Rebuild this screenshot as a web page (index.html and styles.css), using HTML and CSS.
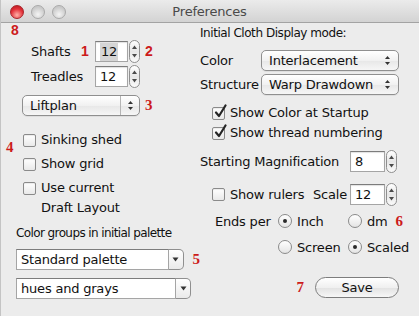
FILE: index.html
```html
<!DOCTYPE html>
<html lang="en">
<head>
  <meta charset="UTF-8" />
  <title>Preferences</title>
  <link rel="stylesheet" href="styles.css">
</head>
<body>
  <div class="window">
    <div class="titlebar">
      <div class="lights">
        <span class="light red"></span>
        <span class="light"></span>
        <span class="light"></span>
      </div>
      <div class="title">Preferences</div>
    </div>
    <span class="mark sans mark-8">8</span>

    <div class="content">
      <div class="col left">
        <div class="spin-row">
          <span class="label short">Shafts</span>
          <span class="mark sans slot">1</span>
          <span class="field"><span class="sel">12</span></span>
          <span class="stepper"><svg width="9" height="19" viewBox="0 0 9 19"><path d="M2 7 L4.5 3.5 L7 7Z"/><path d="M2 12 L4.5 15.5 L7 12Z"/></svg></span>
          <span class="mark sans after">2</span>
        </div>
        <div class="spin-row gap">
          <span class="label">Treadles</span>
          <span class="field">12</span>
          <span class="stepper"><svg width="9" height="19" viewBox="0 0 9 19"><path d="M2 7 L4.5 3.5 L7 7Z"/><path d="M2 12 L4.5 15.5 L7 12Z"/></svg></span>
        </div>
        <div class="popup-row">
          <div class="popup split">
            <span class="popup-text">Liftplan</span>
            <span class="popup-arrows"><svg width="7" height="11" viewBox="0 0 7 11"><path d="M1 4 L3.5 1 L6 4Z"/><path d="M1 7 L3.5 10 L6 7Z"/></svg></span>
          </div>
          <span class="mark serif after">3</span>
        </div>

        <div class="check-row first">
          <span class="mark serif mark-4">4</span>
          <span class="box"></span>
          <span class="check-text">Sinking shed</span>
        </div>
        <div class="check-row">
          <span class="box"></span>
          <span class="check-text">Show grid</span>
        </div>
        <div class="check-row">
          <span class="box"></span>
          <span class="check-text">Use current<br>Draft Layout</span>
        </div>

        <div class="group-label">Color groups in initial palette</div>
        <div class="combo-row">
          <div class="combo">
            <span class="combo-text">Standard palette</span>
            <span class="combo-btn"><svg width="7" height="5" viewBox="0 0 7 5"><path d="M0.5 0.5 L6.5 0.5 L3.5 4.5Z"/></svg></span>
          </div>
          <span class="mark serif after">5</span>
        </div>
        <div class="combo-row second">
          <div class="combo">
            <span class="combo-text">hues and grays</span>
            <span class="combo-btn"><svg width="7" height="5" viewBox="0 0 7 5"><path d="M0.5 0.5 L6.5 0.5 L3.5 4.5Z"/></svg></span>
          </div>
        </div>
      </div>

      <div class="col right">
        <div class="heading">Initial Cloth Display mode:</div>
        <div class="select-row">
          <span class="select-label">Color</span>
          <div class="popup wide">
            <span class="popup-text">Interlacement</span>
            <span class="popup-arrows"><svg width="7" height="11" viewBox="0 0 7 11"><path d="M1 4 L3.5 1 L6 4Z"/><path d="M1 7 L3.5 10 L6 7Z"/></svg></span>
          </div>
        </div>
        <div class="select-row gap">
          <span class="select-label">Structure</span>
          <div class="popup wide">
            <span class="popup-text">Warp Drawdown</span>
            <span class="popup-arrows"><svg width="7" height="11" viewBox="0 0 7 11"><path d="M1 4 L3.5 1 L6 4Z"/><path d="M1 7 L3.5 10 L6 7Z"/></svg></span>
          </div>
        </div>

        <div class="check-row indent first-right">
          <span class="box checked"><svg width="14" height="15" viewBox="0 0 14 15"><path d="M3 8.5 L6 12 L12.5 1.5" fill="none" stroke="#262626" stroke-width="2.2" stroke-linecap="round" stroke-linejoin="round"/></svg></span>
          <span class="check-text">Show Color at Startup</span>
        </div>
        <div class="check-row indent tight">
          <span class="box checked"><svg width="14" height="15" viewBox="0 0 14 15"><path d="M3 8.5 L6 12 L12.5 1.5" fill="none" stroke="#262626" stroke-width="2.2" stroke-linecap="round" stroke-linejoin="round"/></svg></span>
          <span class="check-text">Show thread numbering</span>
        </div>

        <div class="spin-row mag">
          <span class="mag-label">Starting Magnification</span>
          <span class="field">8</span>
          <span class="stepper"><svg width="9" height="19" viewBox="0 0 9 19"><path d="M2 7 L4.5 3.5 L7 7Z"/><path d="M2 12 L4.5 15.5 L7 12Z"/></svg></span>
        </div>
        <div class="spin-row rulers">
          <div class="ruler-check">
            <span class="box"></span>
            <span class="check-text">Show rulers</span>
          </div>
          <span class="scale-label">Scale</span>
          <span class="field">12</span>
          <span class="stepper"><svg width="9" height="19" viewBox="0 0 9 19"><path d="M2 7 L4.5 3.5 L7 7Z"/><path d="M2 12 L4.5 15.5 L7 12Z"/></svg></span>
        </div>

        <div class="radio-row ends">
          <span class="ends-label">Ends per</span>
          <span class="radio-opt first-opt"><span class="radio on"></span>Inch</span>
          <span class="radio-opt"><span class="radio"></span>dm</span>
          <span class="mark serif after6">6</span>
        </div>
        <div class="radio-row screen">
          <span class="radio-opt first-opt"><span class="radio"></span>Screen</span>
          <span class="radio-opt"><span class="radio on"></span>Scaled</span>
        </div>

        <div class="save-row">
          <span class="mark serif">7</span>
          <button class="save">Save</button>
        </div>
      </div>
    </div>
  </div>
</body>
</html>
```

FILE: styles.css
```css
:root {
  --bg: #ececec;
  --text: #111111;
  --mark: #cc1b1b;
  --edge: #8f8f8f;
}
* { margin: 0; padding: 0; box-sizing: border-box; }
body {
  font-family: 'DejaVu Sans', 'Liberation Sans', sans-serif;
  font-size: 13px;
  letter-spacing: -0.2px;
  color: var(--text);
  background: var(--bg);
  width: 419px;
  height: 316px;
  overflow: hidden;
}
.window {
  position: relative;
  width: 419px;
  height: 316px;
  background: var(--bg);
  border-left: 1px solid #c4c4c4;
}

/* title bar */
.titlebar {
  height: 23px;
  display: flex;
  align-items: center;
  background: linear-gradient(#ebebeb, #d3d3d3);
  border-bottom: 1px solid #a3a3a3;
}
.lights {
  display: flex;
  gap: 7px;
  padding-left: 9px;
  padding-top: 2px;
}
.light {
  width: 14px;
  height: 14px;
  border-radius: 50%;
  border: 1px solid #a9a9a9;
  background: radial-gradient(circle at 50% 70%, #f4f4f4, #c9c9c9 70%);
}
.light.red {
  border-color: #a8242a;
  background: radial-gradient(circle at 50% 75%, #ffb1a8, #e4333b 55%, #b3151b 100%);
}
.title {
  flex: 1;
  text-align: center;
  font-size: 13px;
  color: #4a4a4a;
  margin-left: -66px;
  padding-top: 1px;
}

/* red annotation numbers */
.mark {
  color: var(--mark);
  font-weight: bold;
  font-size: 14px;
  line-height: 1;
  letter-spacing: 0;
}
.mark.serif { font-family: 'Liberation Serif', serif; font-size: 15px; }
.mark.sans { font-family: 'Liberation Sans', sans-serif; }
.mark-8 {
  position: absolute;
  left: 10px;
  top: 23px;
}

.content {
  display: flex;
}
.col.left {
  width: 199px;
  padding-top: 17px;
}
.col.right {
  flex: 1;
}

/* spinners */
.spin-row {
  display: flex;
  align-items: center;
  height: 22px;
}
.spin-row.gap { margin-top: 3px; }
.label {
  width: 64px;
  margin-left: 30px;
  padding-top: 1px;
}
.label.short { width: 50px; }
.slot { width: 14px; }
.after { margin-left: 5px; }
.field {
  width: 33px;
  height: 22px;
  background: #fff;
  border: 1px solid #a5a5a5;
  border-top-color: #7c7c7c;
  box-shadow: inset 0 1px 1px rgba(0, 0, 0, 0.12);
  line-height: 20px;
  padding-left: 4px;
}
.sel {
  background: #d5d5d5;
  padding: 1px 1px 2px;
}
.stepper {
  width: 11px;
  height: 23px;
  margin-left: 1px;
  border: 1px solid var(--edge);
  border-radius: 6px;
  background: linear-gradient(#ffffff, #e6e6e6 50%, #fafafa);
  display: flex;
  align-items: center;
  justify-content: center;
}
.stepper svg path { fill: #4a4a4a; }

/* popup buttons */
.popup-row {
  display: flex;
  align-items: center;
  margin-top: 8px;
}
.popup {
  display: flex;
  align-items: center;
  height: 21px;
  border: 1px solid var(--edge);
  border-radius: 5px;
  background: linear-gradient(#ffffff, #f1f1f1 50%, #e7e7e7 51%, #f6f6f6);
  box-shadow: 0 1px 0 rgba(0, 0, 0, 0.06);
}
.popup.split {
  width: 118px;
  margin-left: 21px;
}
.popup-text {
  flex: 1;
  padding-left: 7px;
}
.popup-arrows {
  width: 19px;
  height: 100%;
  display: flex;
  align-items: center;
  justify-content: center;
}
.popup.split .popup-arrows { border-left: 1px solid #b5b5b5; }
.popup-arrows svg path { fill: #333; }

/* checkboxes */
.check-row {
  display: flex;
  align-items: flex-start;
  line-height: 20px;
  margin-top: 4px;
  margin-left: 22px;
}
.check-row.first {
  margin-top: 14px;
  margin-left: 5px;
}
.mark-4 {
  width: 17px;
  height: 10px;
  margin-top: 10px;
}
.box {
  width: 13px;
  height: 13px;
  margin-top: 4px;
  border: 1px solid #8a8a8a;
  border-radius: 2px;
  background: linear-gradient(#ffffff, #e9e9e9);
  box-shadow: inset 0 1px 1px rgba(0, 0, 0, 0.08);
  position: relative;
  flex-shrink: 0;
}
.box.checked svg {
  position: absolute;
  left: 0;
  top: -4px;
}
.check-text {
  margin-left: 5px;
}

.group-label {
  font-size: 12px;
  letter-spacing: -0.6px;
  line-height: 20px;
  margin: 5px 0 0 15px;
  white-space: nowrap;
}

/* combo boxes */
.combo-row {
  display: flex;
  align-items: center;
  margin-top: 6px;
  margin-left: 15px;
}
.combo-row.second { margin-top: 8px; }
.combo {
  display: flex;
  width: 175px;
  height: 21px;
}
.combo-text {
  flex: 1;
  background: #fff;
  border: 1px solid #a5a5a5;
  border-top-color: #7c7c7c;
  line-height: 19px;
  padding-left: 4px;
}
.combo-btn {
  width: 15px;
  border: 1px solid var(--edge);
  border-left: none;
  border-radius: 0 5px 5px 0;
  background: linear-gradient(#ffffff, #eaeaea);
  display: flex;
  align-items: center;
  justify-content: center;
}
.combo-btn svg path { fill: #333; }
.combo-row .after { margin-left: 9px; }

/* right column */
.heading {
  font-size: 12px;
  letter-spacing: -0.45px;
  line-height: 20px;
}
.select-row {
  display: flex;
  align-items: center;
  margin-top: 7px;
}
.select-row.gap { margin-top: 3px; }
.select-label {
  width: 61px;
}
.popup.wide { width: 138px; }
.popup.wide .popup-arrows { width: 22px; }

.check-row.indent { margin-left: 12px; }
.check-row.first-right { margin-top: 8px; }
.check-row.tight { margin-top: 0; }

.spin-row.mag { margin-top: 8px; height: 21px; }
.mag-label {
  width: 150px;
}
.spin-row .field { height: 21px; }
.spin-row.mag .field,
.spin-row.rulers .field { width: 35px; }
.spin-row.rulers { margin-top: 11px; }
.ruler-check {
  width: 113px;
  display: flex;
  align-items: center;
  padding-left: 12px;
}
.ruler-check .box { margin-top: 0; }
.scale-label {
  width: 37px;
}

/* radios */
.radio-row {
  display: flex;
  align-items: center;
  height: 20px;
}
.radio-row.ends { margin-top: 6px; }
.radio-row.screen { margin-top: 6px; padding-left: 78px; }
.ends-label {
  width: 63px;
  margin-left: 15px;
}
.radio-opt {
  display: flex;
  align-items: center;
  gap: 5px;
}
.radio-opt.first-opt { width: 70px; }
.radio {
  width: 14px;
  height: 14px;
  border-radius: 50%;
  border: 1px solid #8a8a8a;
  background: linear-gradient(#ffffff, #e4e4e4);
  display: flex;
  align-items: center;
  justify-content: center;
}
.radio.on::after {
  content: "";
  width: 4px;
  height: 4px;
  border-radius: 50%;
  background: #2a2a2a;
}
.after6 { margin-left: 8px; }

/* save */
.save-row {
  display: flex;
  align-items: center;
  justify-content: flex-end;
  gap: 11px;
  padding-right: 20px;
  margin-top: 20px;
}
.save {
  width: 84px;
  height: 21px;
  border: 1px solid #7d7d7d;
  border-radius: 11px;
  background: linear-gradient(#ffffff, #f0f0f0 50%, #e2e2e2 51%, #f7f7f7);
  font-family: 'DejaVu Sans', sans-serif;
  font-size: 13px;
  letter-spacing: -0.2px;
  color: var(--text);
}
```
